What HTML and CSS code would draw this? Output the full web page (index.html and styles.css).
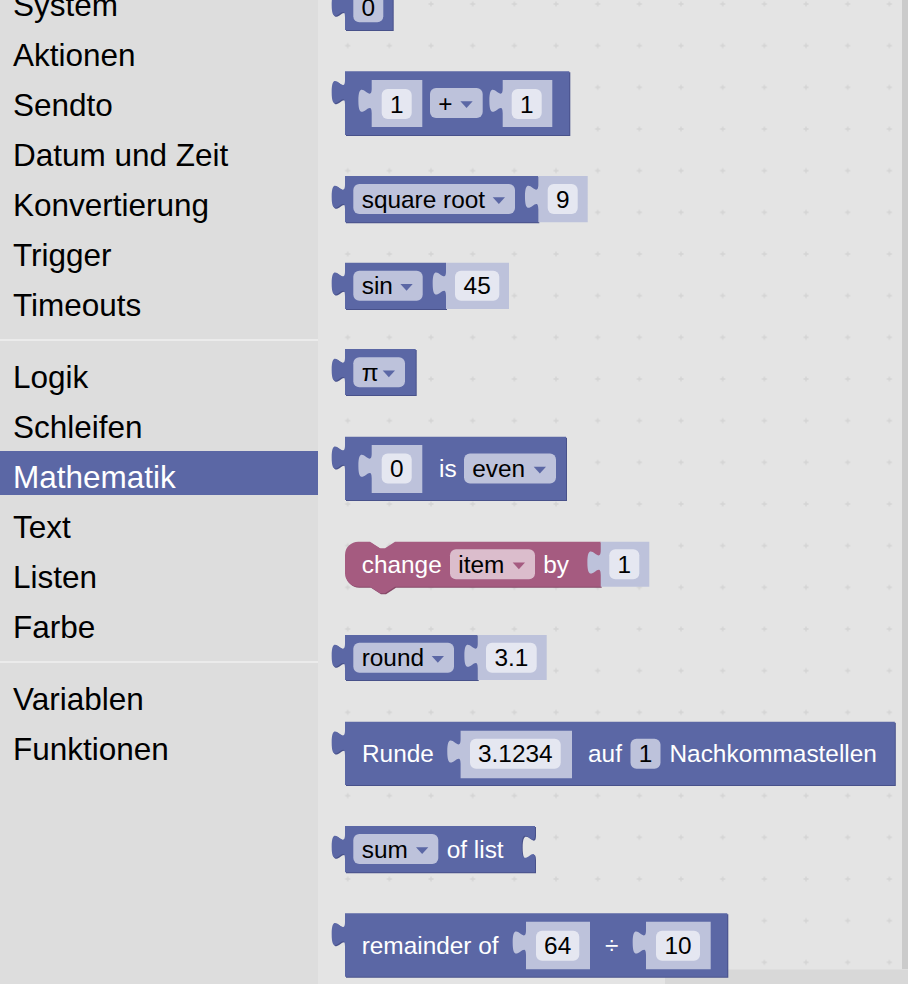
FILE: index.html
```html
<!DOCTYPE html>
<html lang="de">
<head>
    <meta charset="UTF-8">
    <title>Blockly - Mathematik</title>
    <link rel="stylesheet" href="styles.css">
</head>
<body>
    <div class="app">
        <nav class="toolbox">
            <div class="tree">
                <div class="row">System</div>
                <div class="row">Aktionen</div>
                <div class="row">Sendto</div>
                <div class="row">Datum und Zeit</div>
                <div class="row">Konvertierung</div>
                <div class="row">Trigger</div>
                <div class="row">Timeouts</div>
                <div class="sep"></div>
                <div class="row">Logik</div>
                <div class="row">Schleifen</div>
                <div class="row selected">Mathematik</div>
                <div class="row">Text</div>
                <div class="row">Listen</div>
                <div class="row">Farbe</div>
                <div class="sep"></div>
                <div class="row">Variablen</div>
                <div class="row">Funktionen</div>
            </div>
        </nav>

        <main class="workspace">
            <svg class="canvas" width="590" height="984" viewBox="318 0 590 984">
                <defs>
                    <pattern id="grid" patternUnits="userSpaceOnUse" width="41.667" height="41.667" x="326.87" y="-16.83">
                        <path class="grid-cross" d="M18.33,20.83 H23.33 M20.83,18.33 V23.33"/>
                    </pattern>
                </defs>
                <rect x="318" y="0" width="590" height="984" fill="url(#grid)"/>
                <rect class="hscroll" x="665" y="969.5" width="243" height="14.5"/>

                <!-- 0 -->
                <g>
                    <path class="blk" d="M345,-16 H392.7 V30 H345 V17.33 c0,-16.67 -13.33,13.33 -13.33,-12.5 s13.33,4.17 13.33,-12.5 Z"/>
                    <rect class="fld" x="353.3" y="-7.7" width="30" height="30" rx="6"/>
                    <text class="val" x="368.3" y="15.9" text-anchor="middle">0</text>
                </g>

                <!-- 1 + 1 -->
                <g>
                    <path class="blk" d="M345,71.3 H569.3 V135 H345 V104.63 c0,-16.67 -13.33,13.33 -13.33,-12.5 s13.33,4.17 13.33,-12.5 Z"/>
                    <path class="shd" d="M371.7,80 H422.3 V127 H371.7 V113.33 c0,-16.67 -13.33,13.33 -13.33,-12.5 s13.33,4.17 13.33,-12.5 Z"/>
                    <rect class="sfld" x="381.7" y="89" width="30" height="30" rx="6"/>
                    <text class="val" x="396.7" y="112.6" text-anchor="middle">1</text>
                    <rect class="fld" x="430" y="88" width="52.7" height="30" rx="6"/>
                    <text class="val" x="438.3" y="111.6">+</text>
                    <polygon class="tri" points="460.4,101.3 472.7,101.3 466.55,108"/>
                    <path class="shd" d="M502.7,80 H552.3 V127 H502.7 V113.33 c0,-16.67 -13.33,13.33 -13.33,-12.5 s13.33,4.17 13.33,-12.5 Z"/>
                    <rect class="sfld" x="511.7" y="89" width="30" height="30" rx="6"/>
                    <text class="val" x="526.7" y="112.6" text-anchor="middle">1</text>
                </g>

                <!-- square root 9 -->
                <g>
                    <path class="blk" d="M345,176 H538.3 V222.3 H345 V209.33 c0,-16.67 -13.33,13.33 -13.33,-12.5 s13.33,4.17 13.33,-12.5 Z"/>
                    <rect class="fld" x="353.3" y="184" width="161.7" height="30" rx="6"/>
                    <text class="val" x="361.7" y="207.6">square root</text>
                    <polygon class="tri" points="492.7,197.3 505,197.3 498.85,204"/>
                    <path class="shd" d="M538.3,176 H587.7 V222.3 H538.3 V209.33 c0,-16.67 -13.33,13.33 -13.33,-12.5 s13.33,4.17 13.33,-12.5 Z"/>
                    <rect class="sfld" x="547.7" y="184" width="30" height="30" rx="6"/>
                    <text class="val" x="562.7" y="207.6" text-anchor="middle">9</text>
                </g>

                <!-- sin 45 -->
                <g>
                    <path class="blk" d="M345,262.7 H446 V309 H345 V296 c0,-16.67 -13.33,13.33 -13.33,-12.5 s13.33,4.17 13.33,-12.5 Z"/>
                    <rect class="fld" x="353.3" y="270.7" width="69.4" height="30" rx="6"/>
                    <text class="val" x="361.7" y="294.3">sin</text>
                    <polygon class="tri" points="400.4,284 412.7,284 406.55,290.7"/>
                    <path class="shd" d="M446,262.7 H509 V309 H446 V296 c0,-16.67 -13.33,13.33 -13.33,-12.5 s13.33,4.17 13.33,-12.5 Z"/>
                    <rect class="sfld" x="455" y="270.7" width="44.3" height="30" rx="6"/>
                    <text class="val" x="477.15" y="294.3" text-anchor="middle">45</text>
                </g>

                <!-- pi -->
                <g>
                    <path class="blk" d="M345,349 H415.7 V395 H345 V382.33 c0,-16.67 -13.33,13.33 -13.33,-12.5 s13.33,4.17 13.33,-12.5 Z"/>
                    <rect class="fld" x="353.3" y="357.3" width="51.7" height="30" rx="6"/>
                    <text class="val" x="361.7" y="380.9">π</text>
                    <polygon class="tri" points="382.7,370.6 395,370.6 388.85,377.3"/>
                </g>

                <!-- 0 is even -->
                <g>
                    <path class="blk" d="M345,436.7 H566 V500 H345 V470 c0,-16.67 -13.33,13.33 -13.33,-12.5 s13.33,4.17 13.33,-12.5 Z"/>
                    <path class="shd" d="M371.7,445 H422.3 V493 H371.7 V478.33 c0,-16.67 -13.33,13.33 -13.33,-12.5 s13.33,4.17 13.33,-12.5 Z"/>
                    <rect class="sfld" x="381.7" y="453.5" width="30" height="30" rx="6"/>
                    <text class="val" x="396.7" y="477.1" text-anchor="middle">0</text>
                    <text class="lbl" x="439" y="477.1">is</text>
                    <rect class="fld" x="464" y="453.5" width="92" height="30" rx="6"/>
                    <text class="val" x="472.3" y="477.1">even</text>
                    <polygon class="tri" points="533.7,466.8 546,466.8 539.85,473.5"/>
                </g>

                <!-- change item by 1 -->
                <g>
                    <path class="blk var" d="M345,555.03 A13.33,13.33 0 0 1 358.33,541.7 H370 l10,6.67 5,0 10,-6.67 H600.7 V586.7 H395 l-10,6.67 -5,0 -10,-6.67 H358.33 A13.33,13.33 0 0 1 345,573.37 Z"/>
                    <text class="lbl" x="361.7" y="572.9">change</text>
                    <rect class="fld var" x="450" y="549.3" width="85" height="30" rx="6"/>
                    <text class="val" x="458.3" y="572.9">item</text>
                    <polygon class="tri var" points="512.7,562.6 525,562.6 518.85,569.3"/>
                    <text class="lbl" x="543.3" y="572.9">by</text>
                    <path class="shd" d="M600.7,541.7 H649.3 V586.7 H600.7 V575.03 c0,-16.67 -13.33,13.33 -13.33,-12.5 s13.33,4.17 13.33,-12.5 Z"/>
                    <rect class="sfld" x="609.3" y="549.3" width="30" height="30" rx="6"/>
                    <text class="val" x="624.3" y="572.9" text-anchor="middle">1</text>
                </g>

                <!-- round 3.1 -->
                <g>
                    <path class="blk" d="M345,635 H477.7 V680 H345 V668.33 c0,-16.67 -13.33,13.33 -13.33,-12.5 s13.33,4.17 13.33,-12.5 Z"/>
                    <rect class="fld" x="353.3" y="642.7" width="100.7" height="30" rx="6"/>
                    <text class="val" x="361.7" y="666.3">round</text>
                    <polygon class="tri" points="431.7,656 444,656 437.85,662.7"/>
                    <path class="shd" d="M477.7,635 H546.7 V680 H477.7 V668.33 c0,-16.67 -13.33,13.33 -13.33,-12.5 s13.33,4.17 13.33,-12.5 Z"/>
                    <rect class="sfld" x="486" y="642.7" width="50.7" height="30" rx="6"/>
                    <text class="val" x="511.35" y="666.3" text-anchor="middle">3.1</text>
                </g>

                <!-- Runde auf Nachkommastellen -->
                <g>
                    <path class="blk" d="M345,721.7 H894.8 V785 H345 V755.03 c0,-16.67 -13.33,13.33 -13.33,-12.5 s13.33,4.17 13.33,-12.5 Z"/>
                    <text class="lbl" x="362" y="762.4">Runde</text>
                    <path class="shd" d="M460.6,730.7 H572 V778.3 H460.6 V764.03 c0,-16.67 -13.33,13.33 -13.33,-12.5 s13.33,4.17 13.33,-12.5 Z"/>
                    <rect class="sfld" x="470" y="738.8" width="90.7" height="30" rx="6"/>
                    <text class="val" x="515.35" y="762.4" text-anchor="middle">3.1234</text>
                    <text class="lbl" x="588" y="762.4">auf</text>
                    <rect class="fld" x="630.5" y="738.8" width="30" height="30" rx="6"/>
                    <text class="val" x="645.5" y="762.4" text-anchor="middle">1</text>
                    <text class="lbl" x="669.5" y="762.4">Nachkommastellen</text>
                </g>

                <!-- sum of list -->
                <g>
                    <path class="blk" d="M345,826 H535 V834.33 c0,16.67 -13.33,-13.33 -13.33,12.5 s13.33,-4.17 13.33,12.5 V872.3 H345 V859.33 c0,-16.67 -13.33,13.33 -13.33,-12.5 s13.33,4.17 13.33,-12.5 Z"/>
                    <rect class="fld" x="353.3" y="834" width="85" height="30" rx="6"/>
                    <text class="val" x="361.7" y="857.6">sum</text>
                    <polygon class="tri" points="416,847.3 428.3,847.3 422.15,854"/>
                    <text class="lbl" x="446.7" y="857.6">of list</text>
                </g>

                <!-- remainder of -->
                <g>
                    <path class="blk" d="M345,913.3 H727.3 V976.7 H345 V946.63 c0,-16.67 -13.33,13.33 -13.33,-12.5 s13.33,4.17 13.33,-12.5 Z"/>
                    <text class="lbl" x="361.7" y="954.3">remainder of</text>
                    <path class="shd" d="M526,921.7 H590 V969.3 H526 V955.03 c0,-16.67 -13.33,13.33 -13.33,-12.5 s13.33,4.17 13.33,-12.5 Z"/>
                    <rect class="sfld" x="536" y="930.7" width="43.3" height="30" rx="6"/>
                    <text class="val" x="557.65" y="954.3" text-anchor="middle">64</text>
                    <text class="lbl" x="611.7" y="954.3" text-anchor="middle">÷</text>
                    <path class="shd" d="M646,921.7 H710.7 V969.3 H646 V955.03 c0,-16.67 -13.33,13.33 -13.33,-12.5 s13.33,4.17 13.33,-12.5 Z"/>
                    <rect class="sfld" x="656" y="930.7" width="44" height="30" rx="6"/>
                    <text class="val" x="678" y="954.3" text-anchor="middle">10</text>
                </g>

                <rect class="vscroll" x="902" y="0" width="6" height="969"/>
            </svg>
        </main>
    </div>
</body>
</html>
```

FILE: styles.css
```css
* {
    margin: 0;
    padding: 0;
    box-sizing: border-box;
}

body {
    font-family: 'Liberation Sans', Arial, sans-serif;
    width: 908px;
    height: 984px;
    overflow: hidden;
    background-color: #e4e4e4;
}

.app {
    display: flex;
    height: 984px;
}

.toolbox {
    width: 318px;
    flex-shrink: 0;
    background-color: #dddddd;
    overflow: hidden;
}

.tree {
    display: flex;
    flex-direction: column;
    margin-top: -21px;
}

.row {
    height: 44px;
    line-height: 44px;
    padding: 4px 0 0 13px;
    margin-bottom: 6px;
    font-size: 31.5px;
    color: #000;
    white-space: nowrap;
}

.row.selected {
    background-color: #5b67a5;
    color: #fff;
}

.sep {
    height: 2px;
    margin: 10px 0;
    background-color: #ebebeb;
}

.workspace {
    flex: 1;
    background-color: #e4e4e4;
}

.canvas {
    display: block;
}

.grid-cross {
    stroke: #d4d4d4;
    stroke-width: 1.4;
    fill: none;
}

.hscroll {
    fill: #d8d8d8;
}

.vscroll {
    fill: #cbcbcb;
}

.blk {
    fill: #5b67a5;
    filter: drop-shadow(1px 1.5px 0 #48518a);
}

.blk.var {
    fill: #a55b80;
    filter: drop-shadow(1px 1.5px 0 #854867);
}

.shd {
    fill: #bdc2db;
}

.fld {
    fill: #bdc2db;
}

.fld.var {
    fill: #dbbdcc;
}

.sfld {
    fill: #e5e7f1;
}

.tri {
    fill: #5b67a5;
}

.tri.var {
    fill: #a55b80;
}

.lbl,
.val {
    font-family: 'Liberation Sans', Arial, sans-serif;
    font-size: 24.4px;
}

.lbl {
    fill: #fff;
}

.val {
    fill: #000;
}
```
